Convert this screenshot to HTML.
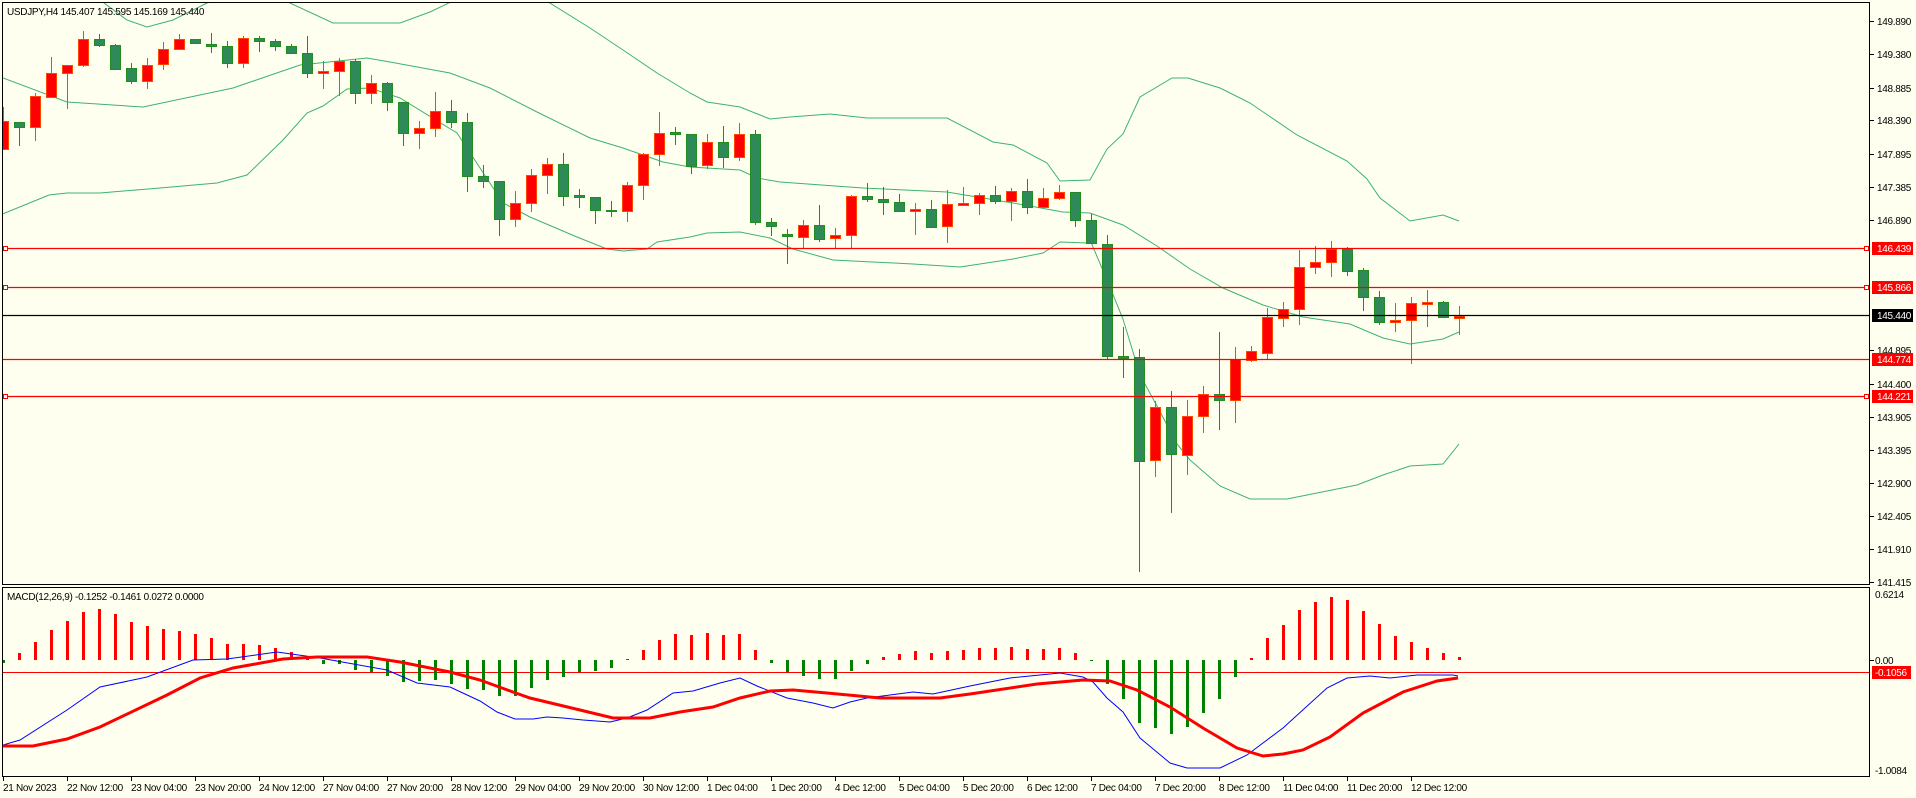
<!DOCTYPE html>
<html><head><meta charset="utf-8"><style>
html,body{margin:0;padding:0;background:#fffff0;width:1916px;height:798px;overflow:hidden}
svg{display:block}
text{font-family:"Liberation Sans",sans-serif;font-size:10px;letter-spacing:-0.3px;fill:#000}
</style></head><body>
<svg width="1916" height="798" viewBox="0 0 1916 798" xmlns="http://www.w3.org/2000/svg">
<rect width="1916" height="798" fill="#fffff0"/>
<defs>
<clipPath id="cm"><rect x="3" y="3" width="1867" height="582"/></clipPath>
<clipPath id="cd"><rect x="3" y="588" width="1867" height="189"/></clipPath>
</defs>
<g clip-path="url(#cm)">
<g fill="none" stroke="#3cb371" stroke-width="1">
<polyline points="100,0 127,20 147,27 173,20 207,3 215,0"/>
<polyline points="285,0 290,3 333,23 400,23 430,12 455,0"/>
<polyline points="545,0 590,28 623,50 657,73 690,93 707,102 740,107 770,119 790,117 830,114 867,118 947,118 993,142 1013,145 1047,163 1060,181 1090,180 1107,149 1123,134 1140,97 1172,78 1188,78 1220,88 1250,103 1297,135 1347,161 1367,179 1380,198 1410,221 1443,215 1459,221"/>
<polyline points="3,78 67,102 143,107 233,88 300,65 367,58 390,62 450,73 490,88 537,112 590,138 623,148 663,162 690,167 740,170 757,178 780,182 863,188 947,192 1013,203 1063,212 1090,213 1123,225 1157,246 1190,269 1223,288 1263,305 1303,317 1350,324 1383,338 1410,344 1443,339 1459,332"/>
<polyline points="0,215 49,195 67,193 100,193 160,188 217,183 247,175 283,140 307,113 323,106 347,89 370,88 400,98 457,133 503,203 530,217 577,237 607,249 623,251 647,249 657,242 690,237 707,233 740,232 770,238 793,249 833,260 913,264 960,267 1013,259 1043,253 1060,242 1087,243 1090,240 1107,280 1123,319 1140,375 1157,406 1177,444 1190,460 1220,486 1250,499 1287,499 1357,485 1383,475 1410,466 1443,464 1459,444"/>
</g>
<g stroke-width="1">
<line x1="3.5" y1="107" x2="3.5" y2="150" stroke="#ff4500"/><rect x="-1.5" y="121.5" width="10" height="28" fill="#f00" stroke="#ff4500"/>
<line x1="19.5" y1="122" x2="19.5" y2="146" stroke="#228b22"/><rect x="14.5" y="122.5" width="10" height="5" fill="#2e8b57" stroke="#228b22"/>
<line x1="35.5" y1="93" x2="35.5" y2="141" stroke="#ff4500"/><rect x="30.5" y="96.5" width="10" height="31" fill="#f00" stroke="#ff4500"/>
<line x1="51.5" y1="57" x2="51.5" y2="98" stroke="#ff4500"/><rect x="46.5" y="73.5" width="10" height="24" fill="#f00" stroke="#ff4500"/>
<line x1="67.5" y1="65" x2="67.5" y2="109" stroke="#ff4500"/><rect x="62.5" y="65.5" width="10" height="8" fill="#f00" stroke="#ff4500"/>
<line x1="83.5" y1="31" x2="83.5" y2="67" stroke="#ff4500"/><rect x="78.5" y="39.5" width="10" height="26" fill="#f00" stroke="#ff4500"/>
<line x1="99.5" y1="34" x2="99.5" y2="47" stroke="#228b22"/><rect x="94.5" y="39.5" width="10" height="6" fill="#2e8b57" stroke="#228b22"/>
<line x1="115.5" y1="44" x2="115.5" y2="70" stroke="#228b22"/><rect x="110.5" y="45.5" width="10" height="24" fill="#2e8b57" stroke="#228b22"/>
<line x1="131.5" y1="63" x2="131.5" y2="84" stroke="#228b22"/><rect x="126.5" y="68.5" width="10" height="13" fill="#2e8b57" stroke="#228b22"/>
<line x1="147.5" y1="58" x2="147.5" y2="89" stroke="#ff4500"/><rect x="142.5" y="65.5" width="10" height="16" fill="#f00" stroke="#ff4500"/>
<line x1="163.5" y1="42" x2="163.5" y2="70" stroke="#ff4500"/><rect x="158.5" y="49.5" width="10" height="15" fill="#f00" stroke="#ff4500"/>
<line x1="179.5" y1="34" x2="179.5" y2="50" stroke="#ff4500"/><rect x="174.5" y="39.5" width="10" height="10" fill="#f00" stroke="#ff4500"/>
<line x1="195.5" y1="39" x2="195.5" y2="44" stroke="#228b22"/><rect x="190.5" y="39.5" width="10" height="4" fill="#2e8b57" stroke="#228b22"/>
<line x1="211.5" y1="33" x2="211.5" y2="53" stroke="#228b22"/><rect x="206.5" y="44.5" width="10" height="2" fill="#2e8b57" stroke="#228b22"/>
<line x1="227.5" y1="41" x2="227.5" y2="68" stroke="#228b22"/><rect x="222.5" y="46.5" width="10" height="17" fill="#2e8b57" stroke="#228b22"/>
<line x1="243.5" y1="36" x2="243.5" y2="68" stroke="#ff4500"/><rect x="238.5" y="38.5" width="10" height="25" fill="#f00" stroke="#ff4500"/>
<line x1="259.5" y1="36" x2="259.5" y2="52" stroke="#228b22"/><rect x="254.5" y="38.5" width="10" height="3" fill="#2e8b57" stroke="#228b22"/>
<line x1="275.5" y1="39" x2="275.5" y2="51" stroke="#228b22"/><rect x="270.5" y="41.5" width="10" height="5" fill="#2e8b57" stroke="#228b22"/>
<line x1="291.5" y1="44" x2="291.5" y2="54" stroke="#228b22"/><rect x="286.5" y="46.5" width="10" height="7" fill="#2e8b57" stroke="#228b22"/>
<line x1="307.5" y1="36" x2="307.5" y2="78" stroke="#228b22"/><rect x="302.5" y="53.5" width="10" height="20" fill="#2e8b57" stroke="#228b22"/>
<line x1="323.5" y1="61" x2="323.5" y2="89" stroke="#ff4500"/><rect x="318.5" y="71.5" width="10" height="2" fill="#f00" stroke="#ff4500"/>
<line x1="339.5" y1="58" x2="339.5" y2="96" stroke="#ff4500"/><rect x="334.5" y="61.5" width="10" height="10" fill="#f00" stroke="#ff4500"/>
<line x1="355.5" y1="59" x2="355.5" y2="104" stroke="#228b22"/><rect x="350.5" y="61.5" width="10" height="32" fill="#2e8b57" stroke="#228b22"/>
<line x1="371.5" y1="75" x2="371.5" y2="104" stroke="#ff4500"/><rect x="366.5" y="83.5" width="10" height="10" fill="#f00" stroke="#ff4500"/>
<line x1="387.5" y1="82" x2="387.5" y2="111" stroke="#228b22"/><rect x="382.5" y="83.5" width="10" height="19" fill="#2e8b57" stroke="#228b22"/>
<line x1="403.5" y1="102" x2="403.5" y2="146" stroke="#228b22"/><rect x="398.5" y="102.5" width="10" height="31" fill="#2e8b57" stroke="#228b22"/>
<line x1="419.5" y1="121" x2="419.5" y2="149" stroke="#ff4500"/><rect x="414.5" y="128.5" width="10" height="5" fill="#f00" stroke="#ff4500"/>
<line x1="435.5" y1="92" x2="435.5" y2="137" stroke="#ff4500"/><rect x="430.5" y="111.5" width="10" height="17" fill="#f00" stroke="#ff4500"/>
<line x1="451.5" y1="100" x2="451.5" y2="128" stroke="#228b22"/><rect x="446.5" y="111.5" width="10" height="11" fill="#2e8b57" stroke="#228b22"/>
<line x1="467.5" y1="113" x2="467.5" y2="192" stroke="#228b22"/><rect x="462.5" y="122.5" width="10" height="54" fill="#2e8b57" stroke="#228b22"/>
<line x1="483.5" y1="165" x2="483.5" y2="188" stroke="#228b22"/><rect x="478.5" y="176.5" width="10" height="5" fill="#2e8b57" stroke="#228b22"/>
<line x1="499.5" y1="181" x2="499.5" y2="236" stroke="#228b22"/><rect x="494.5" y="181.5" width="10" height="38" fill="#2e8b57" stroke="#228b22"/>
<line x1="515.5" y1="191" x2="515.5" y2="227" stroke="#ff4500"/><rect x="510.5" y="203.5" width="10" height="16" fill="#f00" stroke="#ff4500"/>
<line x1="531.5" y1="169" x2="531.5" y2="212" stroke="#ff4500"/><rect x="526.5" y="175.5" width="10" height="28" fill="#f00" stroke="#ff4500"/>
<line x1="547.5" y1="158" x2="547.5" y2="194" stroke="#ff4500"/><rect x="542.5" y="164.5" width="10" height="11" fill="#f00" stroke="#ff4500"/>
<line x1="563.5" y1="153" x2="563.5" y2="206" stroke="#228b22"/><rect x="558.5" y="164.5" width="10" height="32" fill="#2e8b57" stroke="#228b22"/>
<line x1="579.5" y1="189" x2="579.5" y2="208" stroke="#228b22"/><rect x="574.5" y="195.5" width="10" height="2" fill="#2e8b57" stroke="#228b22"/>
<line x1="595.5" y1="197" x2="595.5" y2="224" stroke="#228b22"/><rect x="590.5" y="197.5" width="10" height="13" fill="#2e8b57" stroke="#228b22"/>
<line x1="611.5" y1="201" x2="611.5" y2="217" stroke="#228b22"/><rect x="606.5" y="210.5" width="10" height="1" fill="#2e8b57" stroke="#228b22"/>
<line x1="627.5" y1="182" x2="627.5" y2="222" stroke="#ff4500"/><rect x="622.5" y="185.5" width="10" height="26" fill="#f00" stroke="#ff4500"/>
<line x1="643.5" y1="153" x2="643.5" y2="200" stroke="#ff4500"/><rect x="638.5" y="154.5" width="10" height="31" fill="#f00" stroke="#ff4500"/>
<line x1="659.5" y1="112" x2="659.5" y2="166" stroke="#ff4500"/><rect x="654.5" y="133.5" width="10" height="21" fill="#f00" stroke="#ff4500"/>
<line x1="675.5" y1="127" x2="675.5" y2="145" stroke="#228b22"/><rect x="670.5" y="132.5" width="10" height="2" fill="#2e8b57" stroke="#228b22"/>
<line x1="691.5" y1="134" x2="691.5" y2="174" stroke="#228b22"/><rect x="686.5" y="134.5" width="10" height="32" fill="#2e8b57" stroke="#228b22"/>
<line x1="707.5" y1="134" x2="707.5" y2="169" stroke="#ff4500"/><rect x="702.5" y="142.5" width="10" height="23" fill="#f00" stroke="#ff4500"/>
<line x1="723.5" y1="126" x2="723.5" y2="168" stroke="#228b22"/><rect x="718.5" y="142.5" width="10" height="15" fill="#2e8b57" stroke="#228b22"/>
<line x1="739.5" y1="123" x2="739.5" y2="161" stroke="#ff4500"/><rect x="734.5" y="134.5" width="10" height="23" fill="#f00" stroke="#ff4500"/>
<line x1="755.5" y1="130" x2="755.5" y2="225" stroke="#228b22"/><rect x="750.5" y="134.5" width="10" height="88" fill="#2e8b57" stroke="#228b22"/>
<line x1="771.5" y1="218" x2="771.5" y2="236" stroke="#228b22"/><rect x="766.5" y="222.5" width="10" height="4" fill="#2e8b57" stroke="#228b22"/>
<line x1="787.5" y1="229" x2="787.5" y2="264" stroke="#228b22"/><rect x="782.5" y="234.5" width="10" height="2" fill="#2e8b57" stroke="#228b22"/>
<line x1="803.5" y1="220" x2="803.5" y2="248" stroke="#ff4500"/><rect x="798.5" y="225.5" width="10" height="12" fill="#f00" stroke="#ff4500"/>
<line x1="819.5" y1="205" x2="819.5" y2="242" stroke="#228b22"/><rect x="814.5" y="225.5" width="10" height="14" fill="#2e8b57" stroke="#228b22"/>
<line x1="835.5" y1="228" x2="835.5" y2="249" stroke="#ff4500"/><rect x="830.5" y="235.5" width="10" height="3" fill="#f00" stroke="#ff4500"/>
<line x1="851.5" y1="195" x2="851.5" y2="249" stroke="#ff4500"/><rect x="846.5" y="196.5" width="10" height="39" fill="#f00" stroke="#ff4500"/>
<line x1="867.5" y1="183" x2="867.5" y2="202" stroke="#228b22"/><rect x="862.5" y="196.5" width="10" height="3" fill="#2e8b57" stroke="#228b22"/>
<line x1="883.5" y1="187" x2="883.5" y2="215" stroke="#228b22"/><rect x="878.5" y="199.5" width="10" height="3" fill="#2e8b57" stroke="#228b22"/>
<line x1="899.5" y1="194" x2="899.5" y2="211" stroke="#228b22"/><rect x="894.5" y="202.5" width="10" height="9" fill="#2e8b57" stroke="#228b22"/>
<line x1="915.5" y1="203" x2="915.5" y2="235" stroke="#ff4500"/><rect x="910.5" y="209.5" width="10" height="2" fill="#f00" stroke="#ff4500"/>
<line x1="931.5" y1="200" x2="931.5" y2="228" stroke="#228b22"/><rect x="926.5" y="209.5" width="10" height="18" fill="#2e8b57" stroke="#228b22"/>
<line x1="947.5" y1="190" x2="947.5" y2="243" stroke="#ff4500"/><rect x="942.5" y="204.5" width="10" height="22" fill="#f00" stroke="#ff4500"/>
<line x1="963.5" y1="187" x2="963.5" y2="206" stroke="#ff4500"/><rect x="958.5" y="203.5" width="10" height="2" fill="#f00" stroke="#ff4500"/>
<line x1="979.5" y1="193" x2="979.5" y2="215" stroke="#ff4500"/><rect x="974.5" y="195.5" width="10" height="8" fill="#f00" stroke="#ff4500"/>
<line x1="995.5" y1="186" x2="995.5" y2="204" stroke="#228b22"/><rect x="990.5" y="195.5" width="10" height="6" fill="#2e8b57" stroke="#228b22"/>
<line x1="1011.5" y1="188" x2="1011.5" y2="221" stroke="#ff4500"/><rect x="1006.5" y="191.5" width="10" height="10" fill="#f00" stroke="#ff4500"/>
<line x1="1027.5" y1="179" x2="1027.5" y2="214" stroke="#228b22"/><rect x="1022.5" y="191.5" width="10" height="16" fill="#2e8b57" stroke="#228b22"/>
<line x1="1043.5" y1="188" x2="1043.5" y2="207" stroke="#ff4500"/><rect x="1038.5" y="198.5" width="10" height="9" fill="#f00" stroke="#ff4500"/>
<line x1="1059.5" y1="185" x2="1059.5" y2="200" stroke="#ff4500"/><rect x="1054.5" y="192.5" width="10" height="6" fill="#f00" stroke="#ff4500"/>
<line x1="1075.5" y1="192" x2="1075.5" y2="227" stroke="#228b22"/><rect x="1070.5" y="192.5" width="10" height="28" fill="#2e8b57" stroke="#228b22"/>
<line x1="1091.5" y1="214" x2="1091.5" y2="243" stroke="#228b22"/><rect x="1086.5" y="220.5" width="10" height="23" fill="#2e8b57" stroke="#228b22"/>
<line x1="1107.5" y1="235" x2="1107.5" y2="359" stroke="#228b22"/><rect x="1102.5" y="244.5" width="10" height="112" fill="#2e8b57" stroke="#228b22"/>
<line x1="1123.5" y1="327" x2="1123.5" y2="378" stroke="#228b22"/><rect x="1118.5" y="356.5" width="10" height="2" fill="#2e8b57" stroke="#228b22"/>
<line x1="1139.5" y1="349" x2="1139.5" y2="572" stroke="#228b22"/><rect x="1134.5" y="357.5" width="10" height="104" fill="#2e8b57" stroke="#228b22"/>
<line x1="1155.5" y1="401" x2="1155.5" y2="477" stroke="#ff4500"/><rect x="1150.5" y="407.5" width="10" height="53" fill="#f00" stroke="#ff4500"/>
<line x1="1171.5" y1="391" x2="1171.5" y2="513" stroke="#228b22"/><rect x="1166.5" y="407.5" width="10" height="47" fill="#2e8b57" stroke="#228b22"/>
<line x1="1187.5" y1="400" x2="1187.5" y2="475" stroke="#ff4500"/><rect x="1182.5" y="416.5" width="10" height="39" fill="#f00" stroke="#ff4500"/>
<line x1="1203.5" y1="386" x2="1203.5" y2="433" stroke="#ff4500"/><rect x="1198.5" y="394.5" width="10" height="22" fill="#f00" stroke="#ff4500"/>
<line x1="1219.5" y1="332" x2="1219.5" y2="430" stroke="#228b22"/><rect x="1214.5" y="394.5" width="10" height="6" fill="#2e8b57" stroke="#228b22"/>
<line x1="1235.5" y1="347" x2="1235.5" y2="423" stroke="#ff4500"/><rect x="1230.5" y="359.5" width="10" height="41" fill="#f00" stroke="#ff4500"/>
<line x1="1251.5" y1="346" x2="1251.5" y2="362" stroke="#ff4500"/><rect x="1246.5" y="351.5" width="10" height="9" fill="#f00" stroke="#ff4500"/>
<line x1="1267.5" y1="308" x2="1267.5" y2="360" stroke="#ff4500"/><rect x="1262.5" y="317.5" width="10" height="36" fill="#f00" stroke="#ff4500"/>
<line x1="1283.5" y1="302" x2="1283.5" y2="327" stroke="#ff4500"/><rect x="1278.5" y="309.5" width="10" height="9" fill="#f00" stroke="#ff4500"/>
<line x1="1299.5" y1="250" x2="1299.5" y2="325" stroke="#ff4500"/><rect x="1294.5" y="267.5" width="10" height="42" fill="#f00" stroke="#ff4500"/>
<line x1="1315.5" y1="246" x2="1315.5" y2="274" stroke="#ff4500"/><rect x="1310.5" y="262.5" width="10" height="5" fill="#f00" stroke="#ff4500"/>
<line x1="1331.5" y1="241" x2="1331.5" y2="277" stroke="#ff4500"/><rect x="1326.5" y="249.5" width="10" height="13" fill="#f00" stroke="#ff4500"/>
<line x1="1347.5" y1="247" x2="1347.5" y2="276" stroke="#228b22"/><rect x="1342.5" y="249.5" width="10" height="22" fill="#2e8b57" stroke="#228b22"/>
<line x1="1363.5" y1="268" x2="1363.5" y2="311" stroke="#228b22"/><rect x="1358.5" y="270.5" width="10" height="27" fill="#2e8b57" stroke="#228b22"/>
<line x1="1379.5" y1="291" x2="1379.5" y2="325" stroke="#228b22"/><rect x="1374.5" y="297.5" width="10" height="25" fill="#2e8b57" stroke="#228b22"/>
<line x1="1395.5" y1="303" x2="1395.5" y2="332" stroke="#ff4500"/><rect x="1390.5" y="320.5" width="10" height="2" fill="#f00" stroke="#ff4500"/>
<line x1="1411.5" y1="297" x2="1411.5" y2="364" stroke="#ff4500"/><rect x="1406.5" y="303.5" width="10" height="17" fill="#f00" stroke="#ff4500"/>
<line x1="1427.5" y1="290" x2="1427.5" y2="327" stroke="#ff4500"/><rect x="1422.5" y="302.5" width="10" height="2" fill="#f00" stroke="#ff4500"/>
<line x1="1443.5" y1="301" x2="1443.5" y2="318" stroke="#228b22"/><rect x="1438.5" y="302.5" width="10" height="15" fill="#2e8b57" stroke="#228b22"/>
<line x1="1459.5" y1="306" x2="1459.5" y2="335" stroke="#ff4500"/><rect x="1454.5" y="316.5" width="10" height="2" fill="#f00" stroke="#ff4500"/>
</g>
<g stroke-width="1.2">
<line x1="2" y1="248.5" x2="1870" y2="248.5" stroke="#f00"/>
<line x1="2" y1="287.5" x2="1870" y2="287.5" stroke="#f00"/>
<line x1="2" y1="359.5" x2="1870" y2="359.5" stroke="#f00"/>
<line x1="2" y1="396.5" x2="1870" y2="396.5" stroke="#f00"/>
<line x1="2" y1="315.5" x2="1870" y2="315.5" stroke="#000"/>
</g>
<g fill="#fffff0" stroke="#f00" stroke-width="1">
<rect x="3.5" y="246.5" width="4" height="4"/><rect x="3.5" y="285.5" width="4" height="4"/><rect x="3.5" y="394.5" width="4" height="4"/>
<rect x="1864.5" y="246.5" width="4" height="4"/><rect x="1864.5" y="285.5" width="4" height="4"/><rect x="1864.5" y="394.5" width="4" height="4"/>
</g>
</g>
<text x="7" y="15">USDJPY,H4  145.407 145.595 145.169 145.440</text>

<g clip-path="url(#cd)">
<line x1="2" y1="672.5" x2="1870" y2="672.5" stroke="#f00" stroke-width="1"/>
<g stroke-width="3">
<path stroke="#008000" d="M3.5 660V663M323.5 660V664M339.5 660V664M355.5 660V670M371.5 660V672M387.5 660V676M403.5 660V682M419.5 660V681M435.5 660V680M451.5 660V684M467.5 660V689M483.5 660V690M499.5 660V696M515.5 660V696M531.5 660V688M547.5 660V680M563.5 660V677M579.5 660V672M595.5 660V671M611.5 660V668M771.5 660V663M787.5 660V672M803.5 660V676M819.5 660V679M835.5 660V679M851.5 660V671M867.5 660V664M1091.5 660V661M1107.5 660V684M1123.5 660V699M1139.5 660V723M1155.5 660V728M1171.5 660V734M1187.5 660V727M1203.5 660V713M1219.5 660V699M1235.5 660V677"/>
<path stroke="#f00" d="M19.5 660V653M35.5 660V642M51.5 660V630M67.5 660V621M83.5 660V612M99.5 660V609M115.5 660V614M131.5 660V622M147.5 660V626M163.5 660V629M179.5 660V631M195.5 660V634M211.5 660V638M227.5 660V644M243.5 660V644M259.5 660V645M275.5 660V648M291.5 660V652M307.5 660V657M627.5 660V659M643.5 660V650M659.5 660V640M675.5 660V634M691.5 660V635M707.5 660V633M723.5 660V635M739.5 660V634M755.5 660V650M883.5 660V657M899.5 660V654M915.5 660V651M931.5 660V653M947.5 660V651M963.5 660V650M979.5 660V648M995.5 660V648M1011.5 660V647M1027.5 660V649M1043.5 660V649M1059.5 660V648M1075.5 660V653M1251.5 660V658M1267.5 660V638M1283.5 660V625M1299.5 660V610M1315.5 660V602M1331.5 660V597M1347.5 660V600M1363.5 660V611M1379.5 660V624M1395.5 660V636M1411.5 660V642M1427.5 660V648M1443.5 660V653M1459.5 660V657"/>
</g>
<polyline fill="none" stroke="#00f" stroke-width="1" points="3,745 20,740 67,710 100,687 133,680 147,677 193,660 227,659 277,652 320,658 387,670 417,683 450,687 480,701 497,712 515,719 533,719 547,717 563,718 583,720 610,722 627,718 647,710 673,693 693,691 720,683 740,678 757,686 787,698 813,703 833,708 850,702 867,698 913,692 933,694 970,686 1010,678 1060,673 1083,677 1093,682 1107,698 1123,712 1140,738 1170,763 1187,768 1220,768 1247,755 1283,728 1327,688 1347,678 1370,676 1390,678 1417,675 1453,675 1458,676"/>
<polyline fill="none" stroke="#f00" stroke-width="3" points="3,746 33,746 67,739 100,727 167,695 200,678 233,668 283,659 317,657 367,657 400,662 450,672 480,680 513,692 530,698 580,710 613,718 650,718 680,712 713,707 740,698 770,691 793,690 827,693 880,698 940,698 970,694 1037,684 1083,680 1110,681 1137,690 1170,707 1203,728 1237,748 1263,756 1283,754 1303,750 1330,737 1363,713 1403,692 1437,681 1458,678"/>
</g>
<text x="7" y="600">MACD(12,26,9) -0.1252 -0.1461 0.0272 0.0000</text>

<g fill="none" stroke="#000" stroke-width="1">
<rect x="2.5" y="2.5" width="1867" height="582"/>
<rect x="2.5" y="587.5" width="1867" height="189"/>
</g>

<g stroke="#000" stroke-width="1">
<path d="M1870 21.5h4M1870 54.5h4M1870 88.5h4M1870 120.5h4M1870 154.5h4M1870 187.5h4M1870 220.5h4M1870 350.5h4M1870 384.5h4M1870 417.5h4M1870 450.5h4M1870 483.5h4M1870 516.5h4M1870 549.5h4M1870 582.5h4M1870 660.5h4"/>
<path d="M3.5 777v4M67.5 777v4M131.5 777v4M195.5 777v4M259.5 777v4M323.5 777v4M387.5 777v4M451.5 777v4M515.5 777v4M579.5 777v4M643.5 777v4M707.5 777v4M771.5 777v4M835.5 777v4M899.5 777v4M963.5 777v4M1027.5 777v4M1091.5 777v4M1155.5 777v4M1219.5 777v4M1283.5 777v4M1347.5 777v4M1411.5 777v4"/>
</g>
<g>
<text x="1877" y="25">149.890</text>
<text x="1877" y="58">149.380</text>
<text x="1877" y="92">148.885</text>
<text x="1877" y="124">148.390</text>
<text x="1877" y="158">147.895</text>
<text x="1877" y="191">147.385</text>
<text x="1877" y="224">146.890</text>
<text x="1877" y="354">144.895</text>
<text x="1877" y="388">144.400</text>
<text x="1877" y="421">143.905</text>
<text x="1877" y="454">143.395</text>
<text x="1877" y="487">142.900</text>
<text x="1877" y="520">142.405</text>
<text x="1877" y="553">141.910</text>
<text x="1877" y="586">141.415</text>
<text x="1875" y="598">0.6214</text>
<text x="1875" y="664">0.00</text>
<text x="1875" y="774">-1.0084</text>
</g>
<rect x="1872" y="242" width="41" height="13" fill="#f00"/><text x="1877" y="252" style="fill:#fff">146.439</text>
<rect x="1872" y="281" width="41" height="13" fill="#f00"/><text x="1877" y="291" style="fill:#fff">145.866</text>
<rect x="1872" y="309" width="41" height="13" fill="#000"/><text x="1877" y="319" style="fill:#fff">145.440</text>
<rect x="1872" y="353" width="41" height="13" fill="#f00"/><text x="1877" y="363" style="fill:#fff">144.774</text>
<rect x="1872" y="390" width="41" height="13" fill="#f00"/><text x="1877" y="400" style="fill:#fff">144.221</text>
<rect x="1872" y="666" width="39" height="13" fill="#f00"/><text x="1875" y="676" style="fill:#fff">-0.1056</text>

<g>
<text x="3" y="791">21 Nov 2023</text>
<text x="67" y="791">22 Nov 12:00</text>
<text x="131" y="791">23 Nov 04:00</text>
<text x="195" y="791">23 Nov 20:00</text>
<text x="259" y="791">24 Nov 12:00</text>
<text x="323" y="791">27 Nov 04:00</text>
<text x="387" y="791">27 Nov 20:00</text>
<text x="451" y="791">28 Nov 12:00</text>
<text x="515" y="791">29 Nov 04:00</text>
<text x="579" y="791">29 Nov 20:00</text>
<text x="643" y="791">30 Nov 12:00</text>
<text x="707" y="791">1 Dec 04:00</text>
<text x="771" y="791">1 Dec 20:00</text>
<text x="835" y="791">4 Dec 12:00</text>
<text x="899" y="791">5 Dec 04:00</text>
<text x="963" y="791">5 Dec 20:00</text>
<text x="1027" y="791">6 Dec 12:00</text>
<text x="1091" y="791">7 Dec 04:00</text>
<text x="1155" y="791">7 Dec 20:00</text>
<text x="1219" y="791">8 Dec 12:00</text>
<text x="1283" y="791">11 Dec 04:00</text>
<text x="1347" y="791">11 Dec 20:00</text>
<text x="1411" y="791">12 Dec 12:00</text>
</g>
</svg>
</body></html>
